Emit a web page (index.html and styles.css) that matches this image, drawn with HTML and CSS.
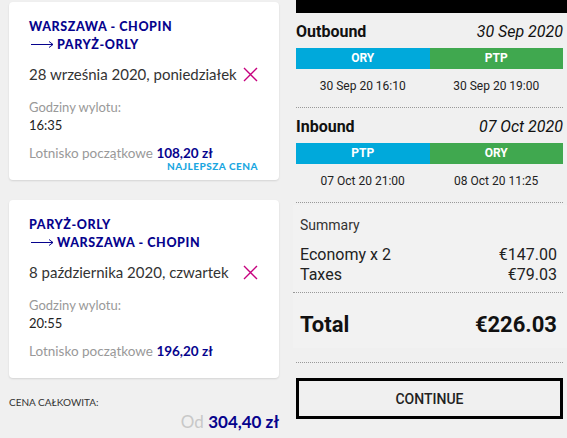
FILE: index.html
```html
<!DOCTYPE html>
<html lang="pl">
<head>
    <meta charset="UTF-8">
    <title>Podsumowanie lotu</title>
    <link rel="stylesheet" href="styles.css">
</head>
<body>
    <div class="page">
        <div class="flights">
            <div class="card">
                <div class="route">WARSZAWA - CHOPIN</div>
                <div class="route">
                    <svg class="arrow" width="23" height="8" viewBox="0 0 23 8"><path d="M0 4.5H22M18 1.5L22 4.5L18 7.5" fill="none" stroke="#06038d" stroke-width="1"/></svg>
                    PARYŻ-ORLY
                </div>
                <div class="date-row">
                    <span>28 września 2020, poniedziałek</span>
                    <svg class="remove" width="15" height="15" viewBox="0 0 15 15"><path d="M1 1L14 14M14 1L1 14" stroke="#c6007e" stroke-width="1.4"/></svg>
                </div>
                <div class="label">Godziny wylotu:</div>
                <div class="time">16:35</div>
                <div class="fare">Lotnisko początkowe <b>108,20 zł</b></div>
                <div class="best">NAJLEPSZA CENA</div>
            </div>

            <div class="card">
                <div class="route">PARYŻ-ORLY</div>
                <div class="route">
                    <svg class="arrow" width="23" height="8" viewBox="0 0 23 8"><path d="M0 4.5H22M18 1.5L22 4.5L18 7.5" fill="none" stroke="#06038d" stroke-width="1"/></svg>
                    WARSZAWA - CHOPIN
                </div>
                <div class="date-row">
                    <span>8 października 2020, czwartek</span>
                    <svg class="remove" width="15" height="15" viewBox="0 0 15 15"><path d="M1 1L14 14M14 1L1 14" stroke="#c6007e" stroke-width="1.4"/></svg>
                </div>
                <div class="label">Godziny wylotu:</div>
                <div class="time">20:55</div>
                <div class="fare">Lotnisko początkowe <b>196,20 zł</b></div>
            </div>

            <div class="total-label">CENA CAŁKOWITA:</div>
            <div class="total-price"><span class="from">Od</span> <b>304,40 zł</b></div>
        </div>

        <div class="booking">
            <div class="topbar"></div>

            <div class="leg">
                <div class="leg-head">
                    <span class="leg-name">Outbound</span>
                    <span class="leg-date">30 Sep 2020</span>
                </div>
                <div class="airports">
                    <div class="from-ap">ORY</div>
                    <div class="to-ap">PTP</div>
                </div>
                <div class="times">
                    <div>30 Sep 20 16:10</div>
                    <div>30 Sep 20 19:00</div>
                </div>
            </div>

            <div class="leg">
                <div class="leg-head">
                    <span class="leg-name">Inbound</span>
                    <span class="leg-date">07 Oct 2020</span>
                </div>
                <div class="airports">
                    <div class="from-ap">PTP</div>
                    <div class="to-ap">ORY</div>
                </div>
                <div class="times">
                    <div>07 Oct 20 21:00</div>
                    <div>08 Oct 20 11:25</div>
                </div>
            </div>

            <div class="summary">
                <div class="summary-title">Summary</div>
                <div class="line"><span>Economy x 2</span><span>€147.00</span></div>
                <div class="line"><span>Taxes</span><span>€79.03</span></div>
                <div class="grand"><span>Total</span><span>€226.03</span></div>
            </div>
            <div class="rule"></div>

            <button class="continue">CONTINUE</button>
        </div>
    </div>
</body>
</html>
```

FILE: styles.css
```css
body {
    margin: 0;
    background-color: #f0f0f0;
    font-family: Lato, 'Open Sans', sans-serif;
    color: #333;
}
.page {
    display: flex;
    align-items: flex-start;
}
.flights {
    width: 270px;
    padding: 2px 0 0 9px;
}
.card {
    box-sizing: border-box;
    min-height: 178px;
    margin-bottom: 20px;
    padding: 15px 21px 0 20px;
    background-color: white;
    border-radius: 4px;
    box-shadow: 0 1px 2px rgba(0, 0, 0, 0.12);
}
.route {
    display: flex;
    align-items: center;
    height: 18px;
    font-size: 12.5px;
    font-weight: 900;
    color: #06038d;
    letter-spacing: 0.6px;
}
.arrow {
    margin: 0 3px 0 2px;
}
.date-row {
    display: flex;
    justify-content: space-between;
    align-items: center;
    height: 22px;
    margin-top: 10px;
    font-size: 15px;
    color: #333;
    white-space: nowrap;
}
.remove {
    margin-top: 1px;
}
.label {
    margin-top: 13px;
    height: 18px;
    line-height: 18px;
    font-size: 13px;
    color: #999;
}
.time {
    height: 18px;
    line-height: 18px;
    font-size: 13px;
    color: #222;
}
.fare {
    margin-top: 10px;
    height: 18px;
    line-height: 18px;
    font-size: 13.5px;
    color: #999;
}
.fare b {
    color: #06038d;
}
.best {
    margin-top: -2px;
    text-align: right;
    line-height: 12px;
    font-size: 10px;
    font-weight: 900;
    color: #1ba7e1;
    letter-spacing: 0.5px;
}
.total-label {
    margin-top: -2px;
    font-size: 10px;
    color: #333;
}
.total-price {
    margin-top: 3px;
    text-align: right;
    font-size: 17px;
}
.total-price .from {
    color: #c8c8c8;
}
.total-price b {
    color: #06038d;
}

.booking {
    flex: 1;
    margin-left: 17px;
    font-family: Roboto, sans-serif;
    color: #111;
    min-height: 438px;
}
.topbar {
    height: 13px;
    background-color: black;
}
.leg {
    margin-right: 4px;
    padding: 9px 0 13px;
    border-bottom: 1px dotted #999;
}
.leg-head {
    display: flex;
    justify-content: space-between;
    align-items: baseline;
    height: 22px;
    margin-bottom: 4px;
}
.leg-name {
    font-size: 16px;
    font-weight: bold;
}
.leg-date {
    font-size: 16px;
    font-style: italic;
}
.airports {
    display: flex;
    height: 21px;
    line-height: 21px;
    color: white;
    font-size: 12px;
    font-weight: bold;
    text-align: center;
}
.airports div {
    flex: 1;
}
.from-ap {
    background-color: #00a9db;
}
.to-ap {
    background-color: #40a84f;
}
.times {
    display: flex;
    margin-top: 9px;
    line-height: 16px;
    font-size: 12px;
    color: #222;
    text-align: center;
}
.times div {
    flex: 1;
}
.summary {
    margin: 2px 0 0 -3px;
    padding: 12px 10px 10px 7px;
    background-color: #f2f2f2;
}
.summary-title {
    line-height: 16px;
    font-size: 14px;
    color: #333;
    margin-bottom: 12px;
}
.line {
    display: flex;
    justify-content: space-between;
    font-size: 16px;
    line-height: 20px;
    color: #222;
}
.grand {
    display: flex;
    justify-content: space-between;
    margin: 7px -6px 0 -7px;
    padding: 19px 6px 0 7px;
    border-top: 1px dotted #999;
    font-size: 22px;
    font-weight: bold;
    line-height: 26px;
}
.rule {
    margin: 14px 4px 0 0;
    border-top: 1px dotted #999;
}
.continue {
    display: block;
    box-sizing: border-box;
    width: 267px;
    height: 41px;
    margin-top: 15px;
    background: none;
    border: 3px solid black;
    font-family: Roboto, sans-serif;
    font-size: 14px;
    font-weight: 500;
    color: #222;
}
```
